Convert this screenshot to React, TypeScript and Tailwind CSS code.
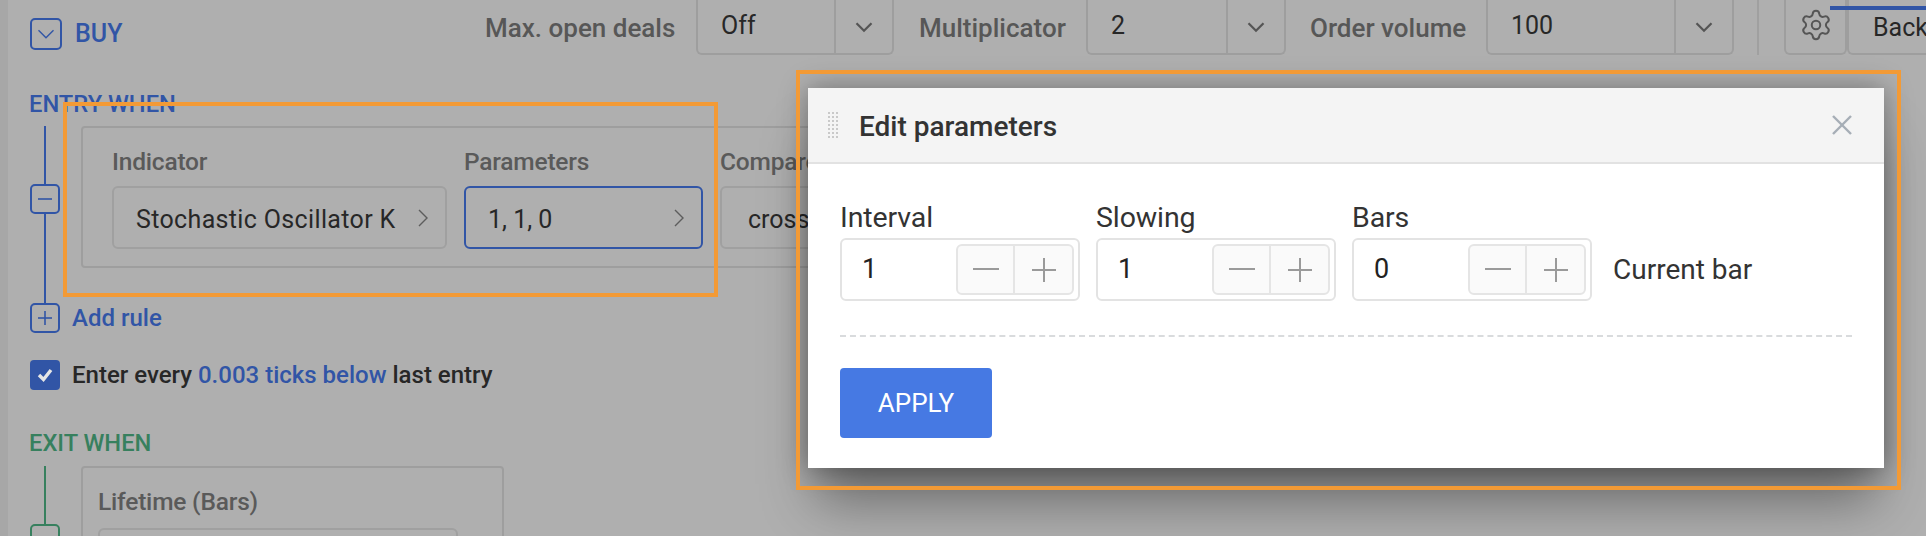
import React from "react";
import { Settings } from "lucide-react";

const ChevronDown = ({ className = "", weight = 3 }: { className?: string; weight?: number }) => (
  <svg viewBox="0 0 24 24" fill="none" stroke="currentColor" strokeWidth={weight} className={className}>
    <polyline points="2,7 12,17 22,7" />
  </svg>
);

const ChevronRight = () => (
  <svg viewBox="0 0 10 18" fill="none" stroke="currentColor" strokeWidth="1.4" className="w-[10px] h-[18px] text-[#5d5d5d]">
    <polyline points="1,1 9,9 1,17" />
  </svg>
);

const TopSelect = ({ value, width, divider }: { value: string; width: string; divider: string }) => (
  <div className={`shrink-0 flex h-[55px] border-2 border-t-0 border-[#9e9e9e] rounded-b-md text-[#272727] text-[25px] ${width}`}>
    <div className={`pl-[23px] pt-[7px] ${divider}`}>{value}</div>
    <div className="flex-1 flex items-center justify-center border-l-2 border-[#9e9e9e]">
      <ChevronDown className="w-[18px] h-[18px] text-[#555555] mt-[1px]" />
    </div>
  </div>
);

const TreeNode = ({ sign, color }: { sign: "minus" | "plus"; color: string }) => (
  <div className={`shrink-0 w-[30px] h-[30px] border-2 rounded-[5px] flex items-center justify-center ${color}`}>
    <svg viewBox="0 0 16 16" className="w-[16px] h-[16px]" stroke="currentColor" strokeWidth="1.6">
      <line x1="1" y1="8" x2="15" y2="8" />
      {sign === "plus" && <line x1="8" y1="1" x2="8" y2="15" />}
    </svg>
  </div>
);

const RuleField = ({ label, value, width, active, wide, inset = "pl-[22px]" }: { label: string; value: string; width: string; active?: boolean; wide?: boolean; inset?: string }) => (
  <div className={`shrink-0 ${width}`}>
    <div className="text-[24.5px] leading-[30px] font-medium text-[#5a5a5a] h-[44px] pt-[5px] tracking-[-0.2px]">{label}</div>
    <div
      className={`h-[63px] border-2 rounded-md flex items-center pr-[17px] text-[25px] text-[#272727] whitespace-nowrap ${inset} ${
        active ? "border-[#3155a6]" : "border-[#a0a0a0]"
      }`}
    >
      <span className={`flex-1 pt-[4px] ${wide ? "tracking-[0.35px]" : ""}`}>{value}</span>
      <ChevronRight />
    </div>
  </div>
);

const Stepper = ({ label, value }: { label: string; value: string }) => (
  <div className="w-[240px]">
    <div className="text-[28.5px] leading-[32px] text-[#333333] pt-[1px] mb-[4px] tracking-[-0.1px]">{label}</div>
    <div className="h-[63px] border-2 border-[#e3e3e3] rounded-md flex items-center pl-[20px] pr-[4px] text-[27px] text-[#222222]">
      <span className="flex-1">{value}</span>
      <div className="flex w-[118px] h-[51px] border-2 border-[#e5e5e5] rounded-md bg-[#fafafa] text-[#9a9a9a]">
        <div className="w-[57px] flex items-center justify-center border-r-2 border-[#e5e5e5]">
          <svg viewBox="0 0 26 26" className="w-[26px] h-[26px]" stroke="currentColor" strokeWidth="2">
            <line x1="0" y1="12" x2="26" y2="12" />
          </svg>
        </div>
        <div className="flex-1 flex items-center justify-center">
          <svg viewBox="0 0 26 26" className="w-[26px] h-[26px]" stroke="currentColor" strokeWidth="2">
            <line x1="1" y1="13" x2="25" y2="13" />
            <line x1="13" y1="1" x2="13" y2="25" />
          </svg>
        </div>
      </div>
    </div>
  </div>
);

const EditParameters = () => (
  <div className="absolute left-[808px] top-[88px] w-[1076px] h-[380px] bg-white shadow-[0_42px_50px_-8px_rgba(0,0,0,0.38),0_0_26px_rgba(0,0,0,0.34)]">
    <div className="h-[76px] bg-[#f4f4f4] border-b-2 border-[#e2e2e2] flex items-center pl-[20px] pr-[32px]">
      <div className="grid grid-cols-3 gap-x-[2px] gap-y-[2px] w-[10px]">
        {Array.from({ length: 21 }).map((_, i) => (
          <span key={i} className="w-[2px] h-[2px] bg-[#c9c9c9]" />
        ))}
      </div>
      <div className="ml-[21px] flex-1 pt-[3px] text-[28px] font-medium text-[#333333]">Edit parameters</div>
      <svg viewBox="0 0 20 20" className="w-[20px] h-[20px] text-[#a6aeb6]" stroke="currentColor" strokeWidth="2.4">
        <line x1="1" y1="1" x2="19" y2="19" />
        <line x1="19" y1="1" x2="1" y2="19" />
      </svg>
    </div>
    <div className="px-[32px] pt-[37px]">
      <div className="flex gap-[16px] items-end">
        <Stepper label="Interval" value="1" />
        <Stepper label="Slowing" value="1" />
        <Stepper label="Bars" value="0" />
        <div className="h-[63px] flex items-center ml-[5px] text-[28px] text-[#333333]">Current bar</div>
      </div>
      <div className="mt-[34px] border-t-2 border-dashed border-[#d9dbdd]" />
      <button className="block mt-[31px] w-[152px] h-[70px] bg-[#4679e3] rounded text-white text-[26px]">APPLY</button>
    </div>
  </div>
);

export default function App() {
  return (
    <div className="relative w-[1926px] h-[536px] overflow-hidden bg-[#afafaf] font-['Roboto',sans-serif] flex">
      <div className="w-2 bg-[#a7a7a7] shrink-0" />
      <div className="flex-1 pl-[22px] min-w-0">
        <div className="flex h-[55px] whitespace-nowrap">
          <div className="shrink-0 w-[455px] flex items-start pt-[18px] text-[#3155a6]">
            <div className="w-[32px] h-[32px] border-2 border-[#3155a6] rounded-[5px] flex items-center justify-center">
              <ChevronDown weight={1.8} className="w-[18px] h-[18px]" />
            </div>
            <span className="ml-[13px] text-[25px] leading-[32px] font-medium">BUY</span>
          </div>
          <div className="shrink-0 w-[190px] pt-[1px] text-[26px] font-medium text-[#575757] leading-[55px]">Max. open deals</div>
          <div className="shrink-0 w-[21px]" />
          <TopSelect value="Off" width="w-[198px]" divider="w-[136px]" />
          <div className="shrink-0 w-[25px]" />
          <div className="shrink-0 w-[146px] pt-[1px] text-[26px] font-medium text-[#575757] leading-[55px]">Multiplicator</div>
          <div className="shrink-0 w-[21px]" />
          <TopSelect value="2" width="w-[200px]" divider="w-[138px]" />
          <div className="shrink-0 w-[24px]" />
          <div className="shrink-0 w-[155px] pt-[1px] text-[26px] font-medium text-[#575757] leading-[55px]">Order volume</div>
          <div className="shrink-0 w-[21px]" />
          <TopSelect value="100" width="w-[248px]" divider="w-[186px]" />
          <div className="shrink-0 w-[25px] border-r-2 border-[#a0a0a0]" />
          <div className="shrink-0 w-[25px]" />
          <div className="shrink-0 w-[63px] border-2 border-t-0 border-[#9e9e9e] rounded-b-md flex items-center justify-center text-[#555555]">
            <Settings size={34} strokeWidth={1.4} className="-mt-[3px]" />
          </div>
          <div className="shrink-0 w-[100px] border-l-2 border-b-2 border-[#9e9e9e] rounded-bl-md text-[25px] text-[#272727] pl-[24px] leading-[55px]">
            Back
          </div>
        </div>

        <div className="mt-[35px] text-[23.7px] leading-[28px] font-medium text-[#3155a6] -ml-px">ENTRY WHEN</div>

        <div className="flex mt-[8px]">
          <div className="w-[30px] h-[177px] flex flex-col items-center">
            <div className="w-[2px] h-[58px] bg-[#3155a6]" />
            <TreeNode sign="minus" color="border-[#3155a6] text-[#3155a6]" />
            <div className="w-[2px] flex-1 bg-[#3155a6]" />
          </div>
          <div className="ml-[21px] w-[900px] h-[142px] border-2 border-[#9e9e9e] rounded-[4px] pl-[29px] pt-[14px] flex gap-[17px]">
            <RuleField label="Indicator" value="Stochastic Oscillator K" width="w-[335px]" wide />
            <RuleField label="Parameters" value="1, 1, 0" width="w-[239px]" active />
            <RuleField label="Compare" value="crosses" width="w-[240px]" inset="pl-[26px]" />
          </div>
        </div>

        <div className="flex items-center h-[30px] text-[#3155a6]">
          <TreeNode sign="plus" color="border-[#3155a6] text-[#3155a6]" />
          <span className="ml-[12px] text-[24px] font-medium">Add rule</span>
        </div>

        <div className="flex items-center h-[30px] mt-[27px] text-[24px] font-medium text-[#272727]">
          <div className="w-[30px] h-[30px] rounded-[4px] bg-[#3155a6] flex items-center justify-center">
            <svg viewBox="0 0 16 16" className="w-[16px] h-[16px] text-[#e6e6e6]" fill="none" stroke="currentColor" strokeWidth="3.4">
              <polyline points="2,8 6.5,12.5 14,3" />
            </svg>
          </div>
          <span className="ml-[12px]">
            Enter every <span className="text-[#3155a6]">0.003 ticks below</span> last entry
          </span>
        </div>

        <div className="mt-[39px] text-[23.7px] leading-[28px] font-medium text-[#37805e] -ml-px">EXIT WHEN</div>

        <div className="flex mt-[9px]">
          <div className="w-[30px] h-[100px] flex flex-col items-center">
            <div className="w-[2px] h-[58px] bg-[#37805e]" />
            <div className="w-[30px] h-[30px] border-2 border-[#37805e] rounded-[5px]" />
          </div>
          <div className="ml-[21px] w-[423px] h-[120px] border-2 border-[#9e9e9e] rounded-[4px] pl-[15px] pt-[19px]">
            <div className="text-[24.5px] leading-[30px] font-medium text-[#5a5a5a] tracking-[-0.2px]">Lifetime (Bars)</div>
            <div className="mt-[11px] w-[360px] h-[63px] border-2 border-[#a0a0a0] rounded-md" />
          </div>
        </div>
      </div>

      <div className="absolute left-[1830px] top-[6px] w-[96px] h-[4px] bg-[#3155a6]" />

      <EditParameters />

      <div className="absolute left-[63px] top-[102px] w-[655px] h-[195px] border-4 border-[#f39a35] pointer-events-none" />
      <div className="absolute left-[796px] top-[70px] w-[1105px] h-[420px] border-4 border-[#f39a35] pointer-events-none" />
    </div>
  );
}
